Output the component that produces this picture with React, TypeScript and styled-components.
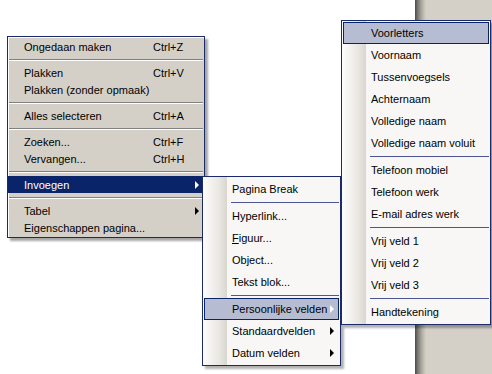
import styled, { createGlobalStyle } from "styled-components";

const GlobalStyle = createGlobalStyle`
  html, body {
    margin: 0;
    padding: 0;
    background: #ffffff;
  }
  body {
    font-family: "Liberation Sans", Arial, sans-serif;
    font-size: 11px;
    color: #000;
  }
`;

const Screen = styled.div`
  position: relative;
  width: 492px;
  height: 374px;
  display: flex;
  background: #ffffff;
  overflow: hidden;
`;

const SidePanel = styled.div`
  margin-left: auto;
  width: 77px;
  background: linear-gradient(
    to right,
    #4a4a4a 0,
    #7c7a75 3px,
    #b2aea6 7px,
    #d4d0c8 11px
  );
`;

/* classic context menu */
const ContextMenu = styled.div`
  position: absolute;
  left: 7px;
  top: 36px;
  width: 198px;
  box-sizing: border-box;
  padding: 1px 0;
  background: #d4d0c8;
  border: 1px solid #1b2a6b;
  box-shadow: inset 1px 1px 0 #ffffff, 3px 3px 2px rgba(0, 0, 0, 0.35);
`;

const ClassicItem = styled.div<{ $active?: boolean }>`
  display: grid;
  grid-template-columns: 129px 1fr 14px;
  align-items: center;
  height: 17px;
  padding-left: 16px;
  background: ${(p) => (p.$active ? "#0a246a" : "transparent")};
  color: ${(p) => (p.$active ? "#ffffff" : "#000000")};
  white-space: nowrap;
`;

const ClassicSeparator = styled.div`
  height: 9px;
  display: flex;
  align-items: center;
  padding: 0 1px;

  &::after {
    content: "";
    flex: 1;
    height: 0;
    border-top: 1px solid #808080;
    border-bottom: 1px solid #ffffff;
  }
`;

const Arrow = styled.span<{ $light?: boolean }>`
  justify-self: center;
  width: 0;
  height: 0;
  border-top: 4px solid transparent;
  border-bottom: 4px solid transparent;
  border-left: 4px solid ${(p) => (p.$light ? "#ffffff" : "#000000")};
`;

/* office xp style submenu */
const SubMenu = styled.div<{ $left: number; $top: number; $width: number }>`
  position: absolute;
  left: ${(p) => p.$left}px;
  top: ${(p) => p.$top}px;
  width: ${(p) => p.$width}px;
  box-sizing: border-box;
  padding: 1px;
  border: 1px solid #1b2a6b;
  background: linear-gradient(
    to right,
    #fdfdfc 0,
    #e9e7e2 16px,
    #d9d6ce 24px,
    #f8f7f5 24px
  );
  box-shadow: 3px 3px 2px rgba(0, 0, 0, 0.3);
`;

const XpItem = styled.div<{ $active?: boolean }>`
  display: flex;
  align-items: center;
  height: 22px;
  box-sizing: border-box;
  padding-left: 27px;
  padding-right: 4px;
  border: 1px solid ${(p) => (p.$active ? "#0a246a" : "transparent")};
  background: ${(p) => (p.$active ? "#b6bdd2" : "transparent")};
  white-space: nowrap;
`;

const XpLabel = styled.span`
  flex: 1;
`;

const XpSeparator = styled.div`
  height: 5px;
  display: flex;
  align-items: center;
  padding-left: 27px;

  &::after {
    content: "";
    flex: 1;
    height: 1px;
    background: #4c5690;
  }
`;

const Key = styled.span`
  text-decoration: underline;
`;

type Entry = { label: string; shortcut?: string; sub?: boolean; active?: boolean } | "sep";

const mainEntries: Entry[] = [
  { label: "Ongedaan maken", shortcut: "Ctrl+Z" },
  "sep",
  { label: "Plakken", shortcut: "Ctrl+V" },
  { label: "Plakken (zonder opmaak)" },
  "sep",
  { label: "Alles selecteren", shortcut: "Ctrl+A" },
  "sep",
  { label: "Zoeken...", shortcut: "Ctrl+F" },
  { label: "Vervangen...", shortcut: "Ctrl+H" },
  "sep",
  { label: "Invoegen", sub: true, active: true },
  "sep",
  { label: "Tabel", sub: true },
  { label: "Eigenschappen pagina..." },
];

const insertEntries: Entry[] = [
  { label: "Pagina Break" },
  "sep",
  { label: "Hyperlink..." },
  { label: "Figuur..." },
  { label: "Object..." },
  { label: "Tekst blok..." },
  "sep",
  { label: "Persoonlijke velden", sub: true, active: true },
  { label: "Standaardvelden", sub: true },
  { label: "Datum velden", sub: true },
];

const personalEntries: Entry[] = [
  { label: "Voorletters", active: true },
  { label: "Voornaam" },
  { label: "Tussenvoegsels" },
  { label: "Achternaam" },
  { label: "Volledige naam" },
  { label: "Volledige naam voluit" },
  "sep",
  { label: "Telefoon mobiel" },
  { label: "Telefoon werk" },
  { label: "E-mail adres werk" },
  "sep",
  { label: "Vrij veld 1" },
  { label: "Vrij veld 2" },
  { label: "Vrij veld 3" },
  "sep",
  { label: "Handtekening" },
];

const renderLabel = (label: string) =>
  label === "Figuur..." ? (
    <>
      <Key>F</Key>iguur...
    </>
  ) : (
    label
  );

const XpList = ({ entries }: { entries: Entry[] }) => (
  <>
    {entries.map((e, i) =>
      e === "sep" ? (
        <XpSeparator key={i} />
      ) : (
        <XpItem key={i} $active={e.active}>
          <XpLabel>{renderLabel(e.label)}</XpLabel>
          {e.sub && <Arrow $light={e.active} />}
        </XpItem>
      )
    )}
  </>
);

export default function App() {
  return (
    <>
      <GlobalStyle />
      <Screen>
        <SidePanel />

        <ContextMenu>
          {mainEntries.map((e, i) =>
            e === "sep" ? (
              <ClassicSeparator key={i} />
            ) : (
              <ClassicItem key={i} $active={e.active}>
                <span>{e.label}</span>
                <span>{e.shortcut}</span>
                {e.sub ? <Arrow $light={e.active} /> : <span />}
              </ClassicItem>
            )
          )}
        </ContextMenu>

        <SubMenu $left={202} $top={176} $width={139}>
          <XpList entries={insertEntries} />
        </SubMenu>

        <SubMenu $left={341} $top={20} $width={150}>
          <XpList entries={personalEntries} />
        </SubMenu>
      </Screen>
    </>
  );
}
